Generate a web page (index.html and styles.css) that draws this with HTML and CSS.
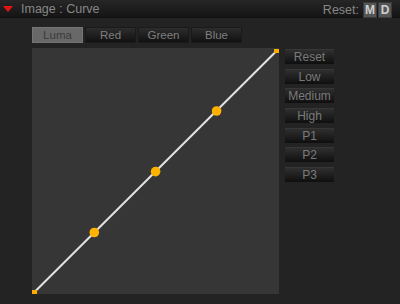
FILE: index.html
```html
<!DOCTYPE html>
<html>
<head>
<meta charset="utf-8">
<link rel="stylesheet" href="styles.css">
</head>
<body>
<div class="panel">
  <div class="header">
    <div class="title">
      <span class="tri"></span>
      <span class="title-text">Image : Curve</span>
    </div>
    <div class="reset">
      <span class="reset-label">Reset:</span>
      <span class="box">M</span>
      <span class="box">D</span>
    </div>
  </div>
  <div class="body">
    <div class="tabs">
      <div class="tab active">Luma</div>
      <div class="tab">Red</div>
      <div class="tab">Green</div>
      <div class="tab">Blue</div>
    </div>
    <div class="work">
      <div class="graph">
        <svg width="247" height="246" viewBox="0 0 247 246">
          <line x1="2.5" y1="244" x2="244.5" y2="3" stroke="#e2e2e2" stroke-width="2"/>
          <circle cx="62.3" cy="184.5" r="4.8" fill="#ffb300"/>
          <circle cx="123.6" cy="123.6" r="4.8" fill="#ffb300"/>
          <circle cx="184.6" cy="63" r="4.8" fill="#ffb300"/>
          <rect x="0" y="242" width="5" height="4" fill="#ffaa00"/>
          <rect x="242" y="1" width="5" height="4" fill="#ffaa00"/>
        </svg>
      </div>
      <div class="presets">
        <div class="btn">Reset</div>
        <div class="btn">Low</div>
        <div class="btn">Medium</div>
        <div class="btn">High</div>
        <div class="btn">P1</div>
        <div class="btn">P2</div>
        <div class="btn">P3</div>
      </div>
    </div>
  </div>
</div>
</body>
</html>
```
FILE: styles.css
```css
html, body {
  margin: 0;
  padding: 0;
  background: #232323;
}
.panel {
  width: 400px;
  height: 304px;
  background: #232323;
  font-family: "Liberation Sans", Arial, sans-serif;
  overflow: hidden;
}
.header {
  height: 18px;
  display: flex;
  justify-content: space-between;
  align-items: center;
  background: linear-gradient(#262626, #151515);
  border-bottom: 1px solid #101010;
  box-sizing: border-box;
}
.title {
  display: flex;
  align-items: center;
}
.tri {
  width: 0;
  height: 0;
  margin-left: 3px;
  margin-top: 1px;
  border-left: 5px solid transparent;
  border-right: 5px solid transparent;
  border-top: 6px solid #e41212;
}
.title-text {
  margin-left: 8px;
  color: #878787;
  font-size: 12.5px;
}
.reset {
  display: flex;
  align-items: center;
  margin-right: 8px;
  margin-top: 2px;
}
.reset-label {
  color: #878787;
  font-size: 12.5px;
  margin-right: 3px;
}
.box {
  width: 12px;
  height: 14px;
  margin-left: 1px;
  background: #555555;
  border: 1px solid #3a3a3a;
  color: #cfcfcf;
  font-size: 12px;
  font-weight: bold;
  text-align: center;
  line-height: 14px;
}
.body {
  padding-left: 32px;
  padding-top: 9px;
}
.tabs {
  display: flex;
  gap: 2px;
}
.tab {
  width: 51px;
  height: 16px;
  box-sizing: border-box;
  background: linear-gradient(#2d2d2d, #111111);
  border: 1px solid #1a1a1a;
  color: #7e7e7e;
  font-size: 11.5px;
  text-align: center;
  line-height: 14px;
}
.tab.active {
  background: #686868;
  border: 1px solid #747474;
  color: #3a3a3a;
}
.work {
  display: flex;
  margin-top: 5px;
}
.graph {
  width: 247px;
  height: 246px;
  background: #363636;
}
.graph svg {
  display: block;
}
.presets {
  margin-left: 6px;
  margin-top: 1px;
  display: flex;
  flex-direction: column;
  gap: 4.67px;
}
.btn {
  width: 49px;
  height: 15px;
  box-sizing: border-box;
  background: linear-gradient(#2f2f2f, #0f0f0f);
  border-top: 1px solid #363636;
  color: #7a7a7a;
  font-size: 12px;
  text-align: center;
  line-height: 14px;
}
```
